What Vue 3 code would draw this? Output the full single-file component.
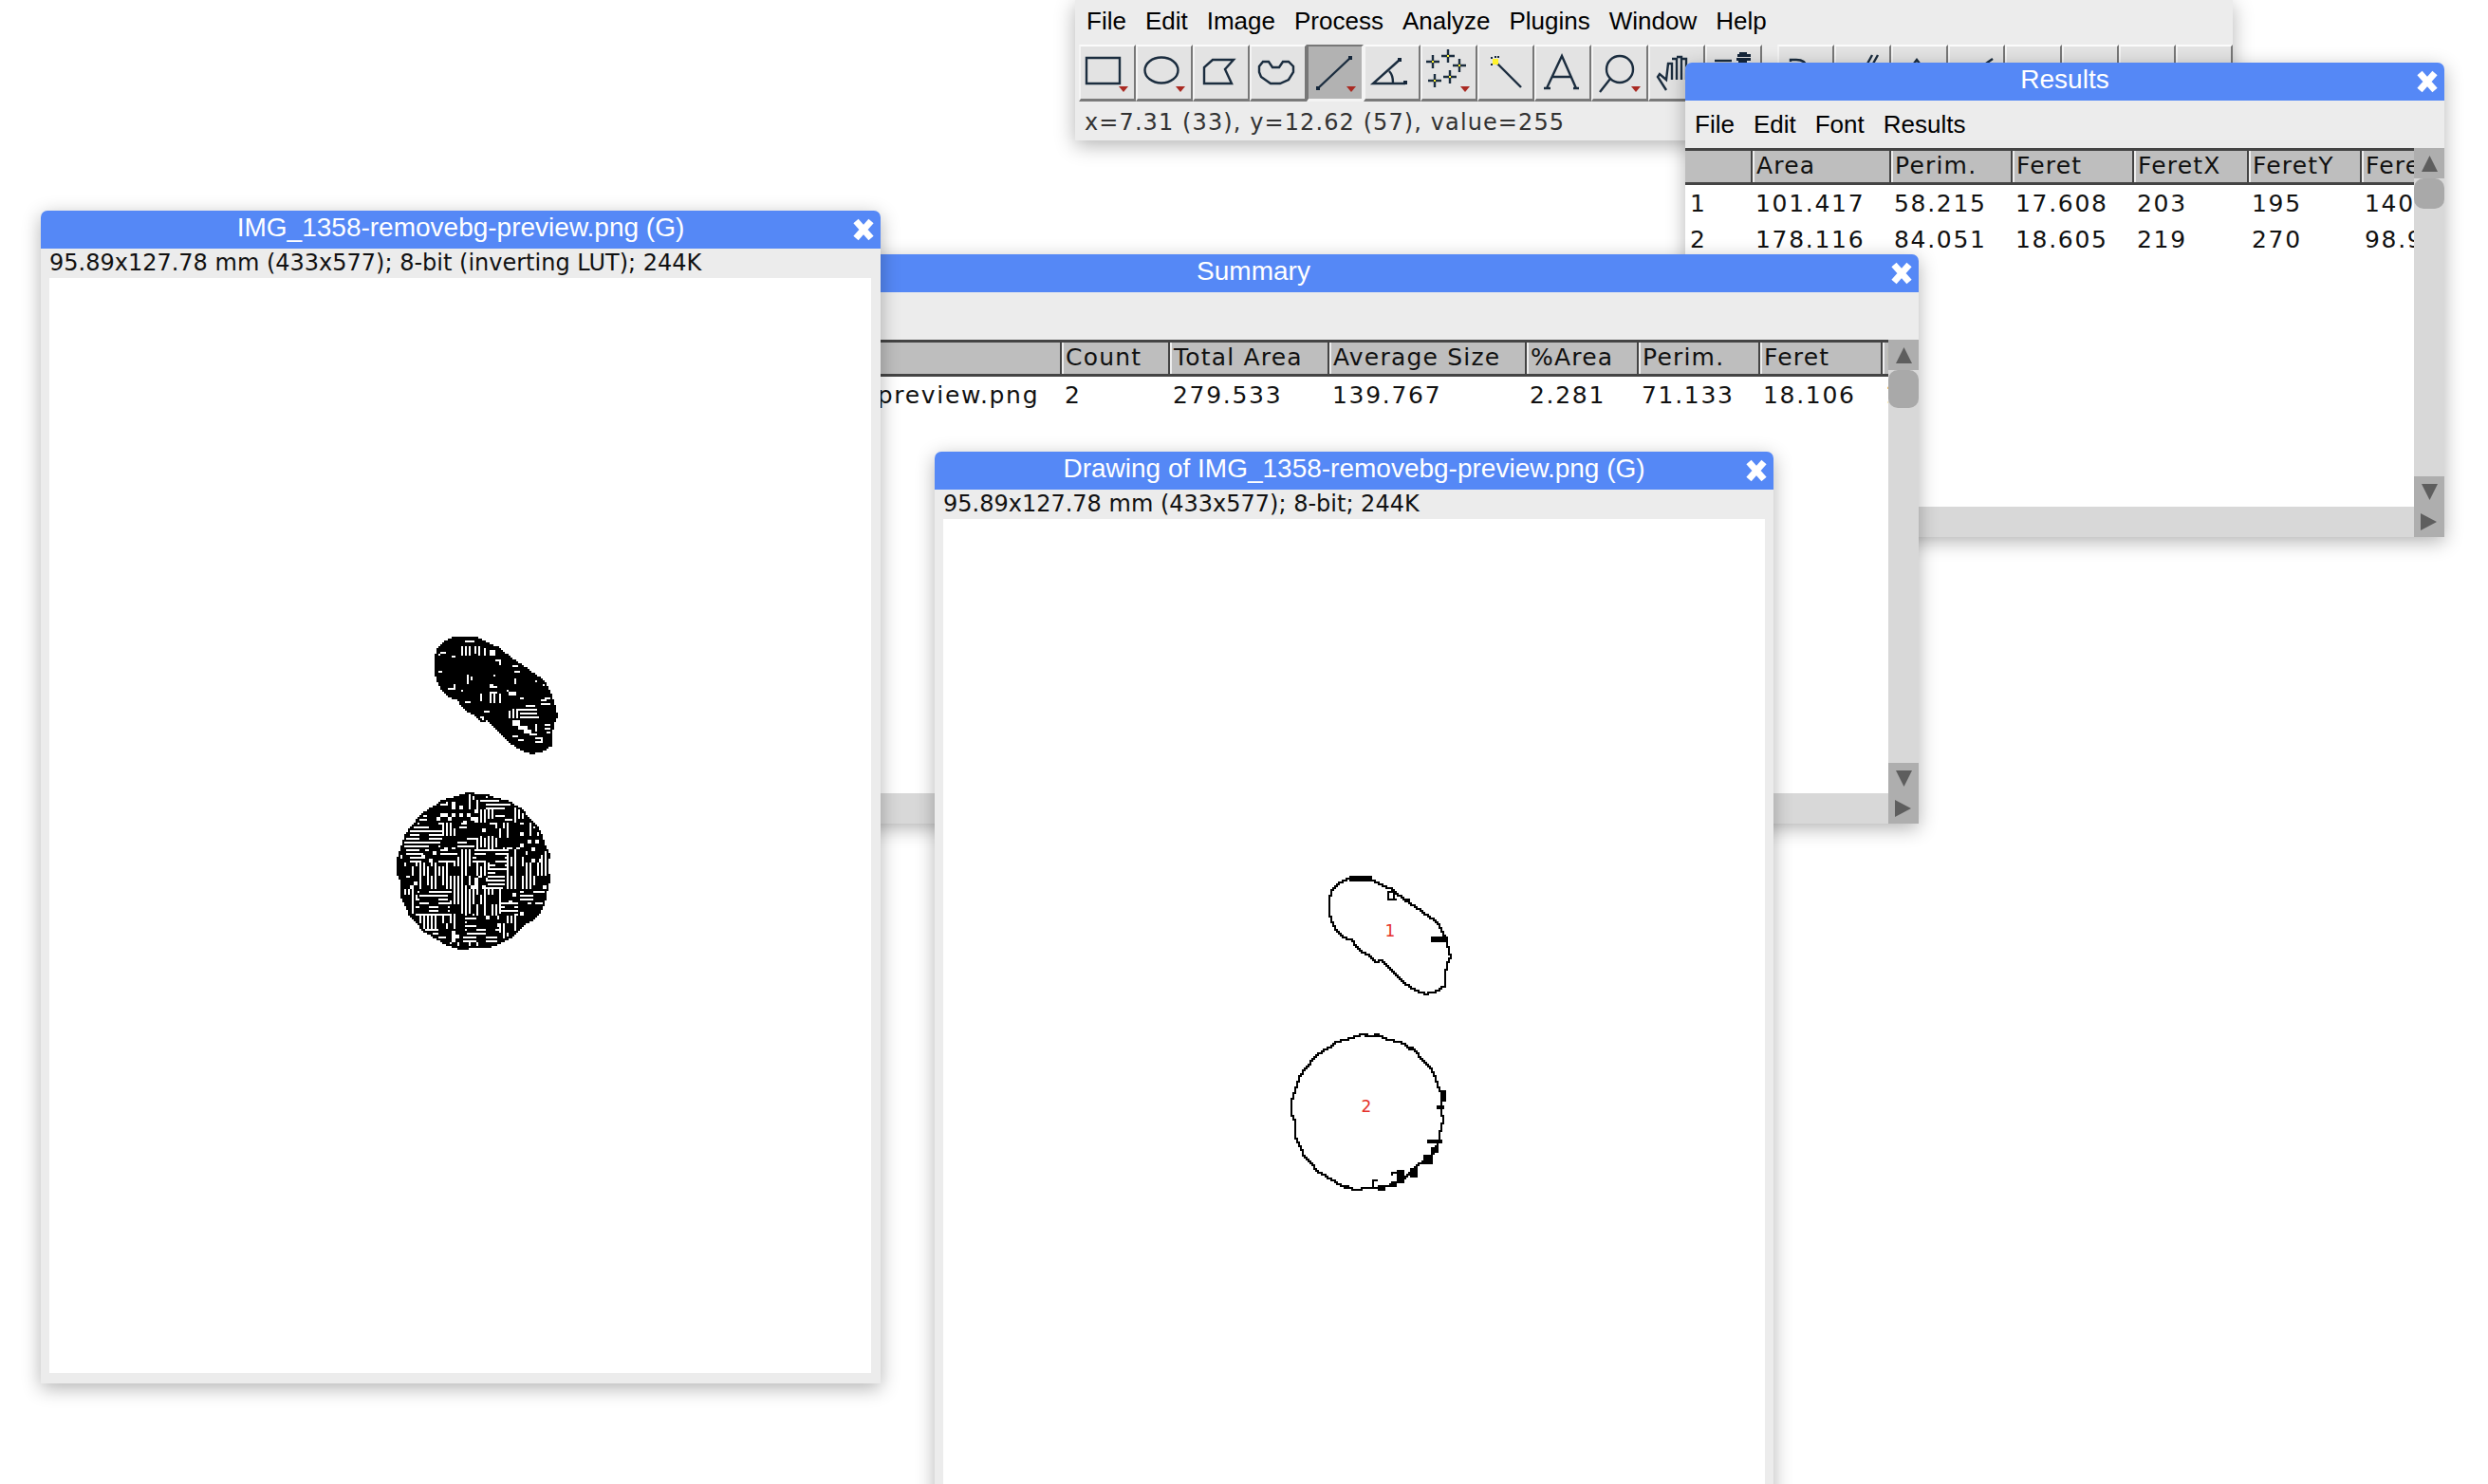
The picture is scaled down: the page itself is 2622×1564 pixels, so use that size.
<script setup>
const W = 433
const H = 577
const IMG_X = 52
const IMG_Y = 293

const poly1 = [[120,45],[195,45],[240,68],[270,82],[300,110],[325,125],[345,140],[375,160],[410,185],[430,225],[440,260],[450,295],[440,320],[432,355],[430,390],[400,410],[365,417],[330,402],[295,380],[265,350],[235,322],[230,310],[205,315],[185,295],[155,278],[140,260],[135,248],[105,235],[80,212],[65,180],[58,150],[58,110],[68,85],[92,58]]
const poly2 = [[280,28],[345,33],[370,45],[410,52],[460,80],[475,105],[500,125],[520,160],[530,190],[545,220],[540,260],[545,305],[535,345],[530,375],[520,400],[495,430],[465,445],[430,485],[390,505],[350,520],[255,523],[215,510],[175,485],[140,465],[125,440],[100,420],[85,380],[70,350],[72,310],[62,290],[62,235],[70,210],[85,165],[105,135],[130,105],[145,90],[175,72],[205,50],[250,40]]

const whites1 = [[240,63,60,4],[270,75,30,4],[258,92,6,30],[270,92,6,30],[282,92,6,30],[300,92,6,25],[312,92,6,30],[330,98,6,22],[190,108,20,6],[180,118,10,6],[225,125,15,5],[345,105,20,15],[185,170,12,5],[278,185,6,28],[290,190,6,10],[215,222,25,6],[232,212,6,10],[270,265,18,6],[315,240,8,25],[345,245,6,25],[360,245,6,30],[375,245,6,30],[350,220,20,6],[350,235,20,5],[410,235,20,15],[445,255,10,5],[460,278,30,5],[510,262,20,6],[510,272,30,5],[520,255,30,4],[440,290,60,5],[445,302,55,5],[445,315,60,6],[410,295,6,25],[420,290,6,30],[430,290,6,30],[330,295,20,5],[305,312,25,6],[315,320,15,5],[420,325,25,18],[435,345,30,12],[455,358,25,12],[475,368,25,6],[490,340,6,25],[520,340,20,6],[520,350,20,6],[530,365,15,5],[420,375,15,5],[440,385,15,5],[490,380,25,6],[490,395,20,6],[510,385,6,15],[365,135,10,6],[380,135,6,15],[420,155,20,5],[425,170,20,5],[360,180,8,6],[425,195,8,15],[490,200,6,6],[515,210,6,6],[400,230,8,6],[260,230,6,6],[350,210,8,6]]
const thick1 = [[125,41,70,18],[385,233,50,14],[243,85,25,6],[243,85,6,30],[243,108,30,8],[262,85,8,30],[300,108,20,10]]
const thick2 = [[535,205,15,35],[522,252,22,14],[492,360,48,14],[505,385,22,20],[480,408,30,30],[435,455,27,30],[395,458,25,40],[380,462,6,15],[380,462,15,6],[320,490,6,30],[320,490,18,6],[335,505,25,20],[380,495,15,20],[230,505,15,15],[430,68,20,10],[275,25,15,8],[325,25,15,8],[295,33,10,8]]

const at = (i, j) => j * W + i
const hash = (a, b) => {
  let n = (a * 374761 + b * 668265 + 1274126) | 0
  n = Math.imul(n ^ (n >>> 13), 1274126177)
  return (n ^ (n >>> 16)) >>> 0
}

// Zoom-pixel shapes are measured at 3x from a page origin.
function rasterPoly(poly, ox, oy) {
  const pts = poly.map(([x, y]) => [(ox + x / 3 - IMG_X) / 2, (oy + y / 3 - IMG_Y) / 2])
  const grid = new Uint8Array(W * H)
  for (let j = 0; j < H; j++) {
    for (let i = 0; i < W; i++) {
      const px = i + 0.5
      const py = j + 0.5
      let inside = false
      for (let a = 0, b = pts.length - 1; a < pts.length; b = a++) {
        const [xa, ya] = pts[a]
        const [xb, yb] = pts[b]
        if (ya > py !== yb > py && px < ((xb - xa) * (py - ya)) / (yb - ya) + xa) inside = !inside
      }
      if (inside) grid[at(i, j)] = 1
    }
  }
  return grid
}
function paintRects(grid, rects, ox, oy, value) {
  for (const [x, y, w, h] of rects) {
    const i0 = Math.round((ox + x / 3 - IMG_X) / 2)
    const j0 = Math.round((oy + y / 3 - IMG_Y) / 2)
    const i1 = Math.max(i0 + 1, Math.round((ox + (x + w) / 3 - IMG_X) / 2))
    const j1 = Math.max(j0 + 1, Math.round((oy + (y + h) / 3 - IMG_Y) / 2))
    for (let j = j0; j < j1; j++) for (let i = i0; i < i1; i++) grid[at(i, j)] = value
  }
}
function boundary(grid) {
  const out = new Uint8Array(W * H)
  for (let j = 1; j < H - 1; j++) {
    for (let i = 1; i < W - 1; i++) {
      if (!grid[at(i, j)]) continue
      let full = true
      for (let dj = -1; dj <= 1; dj++) for (let di = -1; di <= 1; di++) if (!grid[at(i + di, j + dj)]) full = false
      if (!full) out[at(i, j)] = 1
    }
  }
  return out
}
function toPath(grid) {
  let d = ''
  for (let j = 0; j < H; j++) {
    let i = 0
    while (i < W) {
      if (grid[at(i, j)]) {
        const start = i
        while (i < W && grid[at(i, j)]) i++
        d += `M${start} ${j}h${i - start}v1h${start - i}z`
      } else i++
    }
  }
  return d
}

const g1 = rasterPoly(poly1, 438, 656)
const g2 = rasterPoly(poly2, 398, 826)
const edge1 = boundary(g1)
const edge2 = boundary(g2)

const mask = new Uint8Array(W * H)
for (let k = 0; k < mask.length; k++) mask[k] = g1[k]
paintRects(mask, whites1, 400, 650, 0)
for (let k = 0; k < mask.length; k++) if (edge1[k]) mask[k] = 1
for (let j = 0; j < H; j++) {
  for (let i = 0; i < W; i++) {
    if (!g2[at(i, j)]) continue
    const kind = hash(Math.floor((i + (j >> 3)) / 9), Math.floor(j / 7)) % 10
    let black = true
    if (kind < 4) black = !(j % 2 === 1 && hash(Math.floor(i / 5), j) % 3 !== 0)
    else if (kind < 8) black = !(i % 2 === 1 && hash(i, Math.floor(j / 5)) % 3 !== 0)
    else black = hash(Math.floor(i / 2), Math.floor(j / 2)) % 6 !== 0
    mask[at(i, j)] = black || edge2[at(i, j)] ? 1 : 0
  }
}
const filledPath = toPath(mask)

const outline = new Uint8Array(W * H)
for (let k = 0; k < outline.length; k++) outline[k] = edge1[k] || edge2[k] ? 1 : 0
paintRects(outline, thick1, 438, 656, 1)
paintRects(outline, thick2, 398, 826, 1)
const outlinePath = toPath(outline)

const mainMenu = ['File', 'Edit', 'Image', 'Process', 'Analyze', 'Plugins', 'Window', 'Help']

const tools = [
  { s: 'M8 14H43V41H8Z', arrow: true },
  { s: 'M9.5 27a17.5 13.5 0 1 0 35 0a17.5 13.5 0 1 0 -35 0', arrow: true },
  { s: 'M21 16H43L34 26L41 41H12V24Z' },
  { s: 'M14 18H20L24 24H31L35 18H41L46 23V29L41 37L32 41H22L12 34L10 29V23Z' },
  { s: 'M12 46L46 14', f: 'M10 44h4v4h-4zM44 12h4v4h-4z', arrow: true, on: true },
  { s: 'M38 16L10 41H44M27 28Q31 32 31 40', f: 'M36 14h4v4h-4zM42 38h4v4h-4z' },
  { s: 'M6 18H20M13 11V25M22 12H36M29 5V19M34 22H48M41 15V29M8 38H22M15 31V45M24 34H38M31 27V41', y: 'M12 17h2v2h-2zM28 11h2v2h-2zM40 21h2v2h-2zM14 37h2v2h-2zM30 33h2v2h-2z', arrow: true },
  { s: 'M19 18L46 45', y: 'M16 15h6v6h-6z', f: 'M14 13h2v2h-2zM21 12h2v2h-2zM14 20h2v2h-2zM18 12h2v2h-2z' },
  { s: 'M13 46L29 12L44 46M18 34H39M10 46H17M41 46H47' },
  { s: 'M16 26a14 14 0 1 0 28 0a14 14 0 1 0 -28 0M20 36L9 50', arrow: true },
  { s: 'M19 48L10 34L12 31L19 37L21 20H25V37M25 15H30V37M30 13H35V37M35 15H40V37' },
  { s: 'M10 17H28', f: 'M34 10h14v3h-14zM33 14h15v3h-15zM36 8h8v2h-8zM35 17h9v3h-9z' }
]
const tools2 = [
  { s: 'M14 18V16H20Q30 16 31 24' },
  { s: 'M35 20L40 11M41 20L46 11' },
  { s: 'M24 20L27 16L30 20' },
  { s: 'M37 22L47 15' },
  { s: '' },
  { s: '' },
  { s: '' },
  { s: '' }
]

const resultsTable = {
  key: 'results',
  title: 'Results',
  menu: ['File', 'Edit', 'Font', 'Results'],
  columns: '69px 146px 128px 128px 121px 119px 57px',
  head: ['', 'Area', 'Perim.', 'Feret', 'FeretX', 'FeretY', 'FeretAngle'],
  rows: [
    ['1', '101.417', '58.215', '17.608', '203', '195', '140.194'],
    ['2', '178.116', '84.051', '18.605', '219', '270', '98.973']
  ]
}
const summaryTable = {
  key: 'summary',
  title: 'Summary',
  menu: [],
  columns: '497px 114px 168px 208px 118px 128px 129px 8px',
  head: ['Slice', 'Count', 'Total Area', 'Average Size', '%Area', 'Perim.', 'Feret', 'MinFeret'],
  rows: [['IMG_1358-removebg-preview.png', '2', '279.533', '139.767', '2.281', '71.133', '18.106', '15.2']]
}
</script>

<template>
  <div class="desktop">
    <!-- main toolbar window -->
    <section class="window win-main">
      <nav class="menu main-menu">
        <span v-for="m in mainMenu" :key="m">{{ m }}</span>
      </nav>
      <div class="toolbar">
        <div class="tool-group">
          <div v-for="(t, n) in tools" :key="n" class="tool" :class="{ on: t.on }">
            <svg viewBox="0 0 60 60" width="60" height="60" class="tool-svg">
              <path v-if="t.s" :d="t.s" class="tool-line" />
              <path v-if="t.f" :d="t.f" class="tool-fill" />
              <path v-if="t.y" :d="t.y" class="tool-yellow" />
              <path v-if="t.arrow" d="M42 44H52L47 50Z" class="tool-arrow" />
            </svg>
          </div>
        </div>
        <div class="tool-group">
          <div v-for="(t, n) in tools2" :key="n" class="tool">
            <svg viewBox="0 0 60 60" width="60" height="60" class="tool-svg">
              <path v-if="t.s" :d="t.s" class="tool-line" />
            </svg>
          </div>
        </div>
      </div>
      <div class="main-status">x=7.31 (33), y=12.62 (57), value=255</div>
    </section>

    <!-- table windows -->
    <section
      v-for="tw in [resultsTable, summaryTable]"
      :key="tw.key"
      class="window table-window"
      :class="'win-' + tw.key"
    >
      <header class="titlebar">
        {{ tw.title }}
        <svg class="close" viewBox="0 0 24 24" width="24" height="24"><path d="M4 3L20 21M20 3L4 21" /></svg>
      </header>
      <nav class="menu table-menu">
        <span v-for="m in tw.menu" :key="m">{{ m }}</span>
      </nav>
      <div class="table-body">
        <div class="table-pane">
          <div class="table-grid">
            <div class="thead" :style="{ gridTemplateColumns: tw.columns }">
              <div v-for="(h, n) in tw.head" :key="n" class="cell head-cell">{{ h }}</div>
            </div>
            <div v-for="(r, rn) in tw.rows" :key="rn" class="trow" :style="{ gridTemplateColumns: tw.columns }">
              <div v-for="(c, n) in r" :key="n" class="cell data-cell">{{ c }}</div>
            </div>
          </div>
          <div class="hbar"></div>
        </div>
        <div class="vbar">
          <div class="sb-box">
            <svg viewBox="0 0 32 32" width="32" height="32"><polygon points="8,25 25,25 16.5,8" /></svg>
          </div>
          <div class="thumb"></div>
          <div class="track"></div>
          <div class="sb-box">
            <svg viewBox="0 0 32 32" width="32" height="32"><polygon points="8,8 25,8 16.5,25" /></svg>
          </div>
          <div class="sb-box">
            <svg viewBox="0 0 32 32" width="32" height="32"><polygon points="7,7 24,16 7,25" /></svg>
          </div>
        </div>
      </div>
    </section>

    <!-- image window -->
    <section class="window image-window win-image">
      <header class="titlebar">
        IMG_1358-removebg-preview.png (G)
        <svg class="close" viewBox="0 0 24 24" width="24" height="24"><path d="M4 3L20 21M20 3L4 21" /></svg>
      </header>
      <div class="image-status">95.89x127.78 mm (433x577); 8-bit (inverting LUT); 244K</div>
      <svg class="canvas" viewBox="0 0 433 577" width="866" height="1154">
        <path :d="filledPath" class="pixels" />
      </svg>
    </section>

    <!-- drawing window -->
    <section class="window image-window win-drawing">
      <header class="titlebar">
        Drawing of IMG_1358-removebg-preview.png (G)
        <svg class="close" viewBox="0 0 24 24" width="24" height="24"><path d="M4 3L20 21M20 3L4 21" /></svg>
      </header>
      <div class="image-status">95.89x127.78 mm (433x577); 8-bit; 244K</div>
      <svg class="canvas" viewBox="0 0 433 577" width="866" height="1154">
        <path :d="outlinePath" class="pixels" />
        <text x="235.5" y="220" class="label">1</text>
        <text x="223" y="312.5" class="label">2</text>
      </svg>
    </section>
  </div>
</template>

<style>
html,
body {
  margin: 0;
  background: #fff;
}
</style>

<style scoped>
.desktop {
  position: relative;
  width: 2622px;
  height: 1564px;
  overflow: hidden;
  background: #fff;
  font-family: "Liberation Sans", Arial, sans-serif;
}
.window {
  position: absolute;
  display: flex;
  flex-direction: column;
  background: #ececec;
  box-shadow: 0 5px 20px rgba(0, 0, 0, 0.3);
  border-radius: 7px 7px 0 0;
  overflow: hidden;
}
.win-main {
  left: 1133px;
  top: 0;
  width: 1220px;
  height: 148px;
  border-radius: 0;
  z-index: 1;
}
.win-results {
  left: 1776px;
  top: 66px;
  width: 800px;
  height: 500px;
  z-index: 2;
}
.win-summary {
  left: 620px;
  top: 268px;
  width: 1402px;
  height: 600px;
  z-index: 3;
}
.win-image {
  left: 43px;
  top: 222px;
  width: 885px;
  height: 1236px;
  z-index: 4;
}
.win-drawing {
  left: 985px;
  top: 476px;
  width: 884px;
  height: 1240px;
  z-index: 5;
}
.titlebar {
  position: relative;
  flex: none;
  height: 40px;
  line-height: 36px;
  background: #5588f6;
  color: #fff;
  font-size: 28px;
  text-align: center;
  white-space: nowrap;
}
.close {
  position: absolute;
  right: 6px;
  top: 8px;
}
.close path {
  fill: none;
  stroke: #fff;
  stroke-width: 7;
}
.menu {
  flex: none;
  display: flex;
  font-size: 26px;
  color: #000;
  white-space: nowrap;
}
.main-menu {
  height: 47px;
  line-height: 44px;
  padding-left: 12px;
  gap: 20px;
}
.table-menu {
  height: 50px;
  line-height: 50px;
  padding-left: 10px;
  gap: 20px;
}
.toolbar {
  flex: none;
  display: flex;
  gap: 16px;
  padding-left: 4px;
  height: 60px;
}
.tool-group {
  display: flex;
}
.tool {
  box-sizing: border-box;
  width: 60px;
  height: 60px;
  position: relative;
  background: #e3e3e3;
  border-top: 2px solid #fbfbfb;
  border-left: 2px solid #f4f4f4;
  border-right: 2px solid #777;
  border-bottom: 3px solid #7a7a7a;
}
.tool.on {
  background: #b2b2b2;
  border-top: 2px solid #777;
  border-left: 2px solid #777;
  border-right: 2px solid #f4f4f4;
  border-bottom: 3px solid #f4f4f4;
}
.tool-svg {
  position: absolute;
  left: -2px;
  top: -2px;
}
.tool-line {
  fill: none;
  stroke: #1b2d3f;
  stroke-width: 2.4;
}
.tool-fill {
  fill: #14263a;
}
.tool-yellow {
  fill: #fff22a;
}
.tool-arrow {
  fill: #aa2a22;
}
.main-status {
  flex: none;
  height: 41px;
  line-height: 45px;
  padding-left: 10px;
  font-family: "DejaVu Sans", sans-serif;
  font-size: 24px;
  letter-spacing: 1.1px;
  color: #333;
  white-space: nowrap;
}
.table-body {
  flex: 1;
  min-height: 0;
  display: flex;
}
.table-pane {
  flex: 1;
  min-width: 0;
  display: flex;
  flex-direction: column;
}
.table-grid {
  flex: 1;
  min-height: 0;
  background: #fff;
  overflow: hidden;
  font-family: "DejaVu Sans", sans-serif;
  font-size: 25px;
  color: #111;
}
.thead {
  display: grid;
  height: 39px;
  box-sizing: border-box;
  background: #bebebe;
  border-top: 3px solid #444;
  border-bottom: 3px solid #444;
}
.trow {
  display: grid;
  height: 38px;
}
.cell {
  white-space: nowrap;
  overflow: hidden;
}
.data-cell {
  padding-left: 5px;
  line-height: 40px;
  letter-spacing: 1.7px;
}
.win-summary .data-cell:first-child {
  text-align: right;
  padding-right: 25px;
}
.head-cell {
  line-height: 31px;
  letter-spacing: 1.2px;
  border-left: 2px solid #444;
  box-shadow: inset 2px 0 0 #eee;
  padding-left: 4px;
}
.head-cell:first-child {
  border-left: 0;
  box-shadow: none;
}
.hbar {
  flex: none;
  height: 32px;
  background: #d8d8d8;
}
.vbar {
  flex: none;
  width: 32px;
  display: flex;
  flex-direction: column;
  background: #d8d8d8;
}
.sb-box {
  flex: none;
  width: 32px;
  height: 32px;
  background: #aeaeae;
}
.sb-box svg {
  display: block;
}
.sb-box polygon {
  fill: #5e5e5e;
}
.thumb {
  flex: none;
  height: 32px;
  background: #a9a9a9;
  border-radius: 10px;
}
.win-summary .thumb {
  height: 40px;
}
.track {
  flex: 1;
}
.image-window {
  align-items: flex-start;
}
.image-window .titlebar {
  align-self: stretch;
}
.image-status {
  flex: none;
  height: 31px;
  line-height: 30px;
  padding-left: 9px;
  font-family: "DejaVu Sans", sans-serif;
  font-size: 24px;
  color: #111;
  white-space: nowrap;
}
.canvas {
  flex: none;
  display: block;
  margin-left: 9px;
  background: #fff;
}
.pixels {
  fill: #000;
  shape-rendering: crispEdges;
}
.label {
  fill: #e5322b;
  font-family: "DejaVu Sans", sans-serif;
  font-size: 8.5px;
  text-anchor: middle;
}
</style>
